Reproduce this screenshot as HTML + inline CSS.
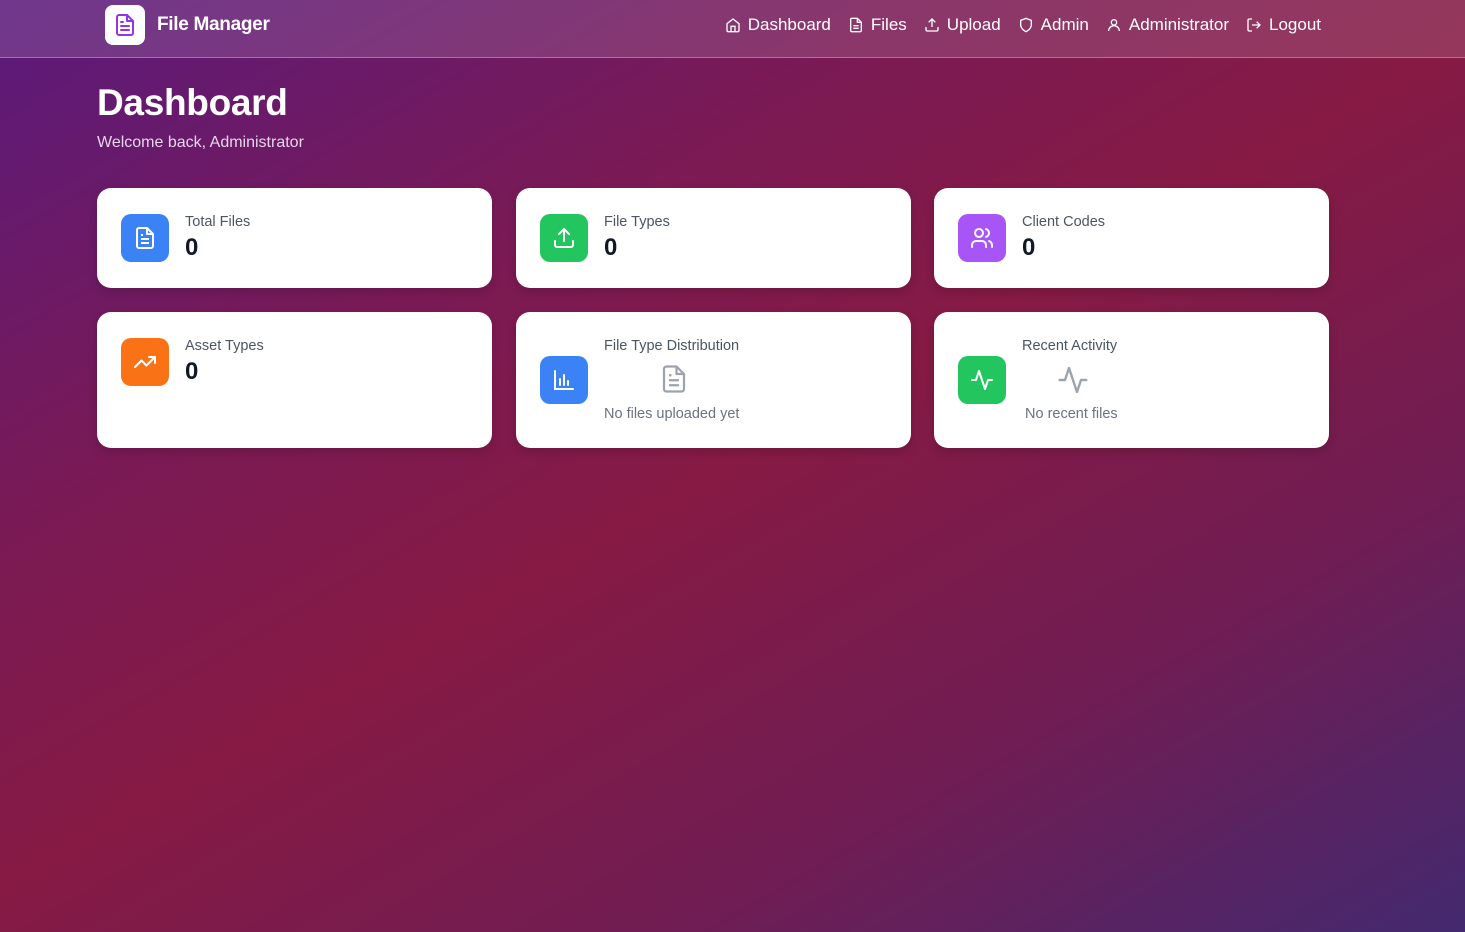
<!DOCTYPE html>
<html><head><meta charset="utf-8"><style>
*{box-sizing:border-box;margin:0;padding:0}
html,body{width:1465px;height:932px;overflow:hidden}
body{font-family:"Liberation Sans",sans-serif;background:linear-gradient(150deg,#5a1a7c 0%,#7a1a55 30%,#861a44 50%,#6f1d54 75%,#43296f 100%);position:relative;color:#fff}
.hdr{position:absolute;left:0;top:0;width:1465px;height:58px;background:rgba(255,255,255,0.13);border-bottom:1px solid rgba(255,255,255,0.3)}
.logo{position:absolute;left:105px;top:5px;width:40px;height:40px;background:#fff;border-radius:8px;display:flex;align-items:center;justify-content:center}
.brand{position:absolute;left:157px;top:14px;font-size:19px;font-weight:bold;letter-spacing:-0.3px}
.nav{position:absolute;right:144px;top:15px;display:flex;gap:17px;font-size:17px}
.nav span{display:flex;align-items:center;gap:7px}
h1{position:absolute;left:97px;top:82px;font-size:37px;font-weight:bold;letter-spacing:-0.3px}
.sub{position:absolute;left:97px;top:134px;font-size:16px;color:#e6d5ea}
.card{position:absolute;background:#fff;border-radius:14px;width:395px;box-shadow:0 4px 10px rgba(0,0,0,.15)}
.ic{position:absolute;left:24px;width:48px;height:48px;border-radius:10px;display:flex;align-items:center;justify-content:center}
.lbl{position:absolute;left:88px;font-size:14.5px;color:#4b5563}
.num{position:absolute;left:88px;font-size:24px;font-weight:bold;color:#111827}
.empty{position:absolute;font-size:14.5px;color:#6b7280;text-align:center}
</style></head><body>
<div class="hdr">
 <div class="logo"><svg width="24" height="24" viewBox="0 0 24 24" fill="none" stroke="#9333ea" stroke-width="2" stroke-linecap="round" stroke-linejoin="round"><path d="M14 2H6a2 2 0 0 0-2 2v16a2 2 0 0 0 2 2h12a2 2 0 0 0 2-2V8z"/><path d="M14 2v6h6M16 13H8M16 17H8M10 9H8"/></svg></div>
 <div class="brand">File Manager</div>
 <div class="nav">
  <span><svg width="16" height="16" viewBox="0 0 24 24" fill="none" stroke="#fff" stroke-width="2"><path d="M3 10l9-7 9 7v10a2 2 0 0 1-2 2H5a2 2 0 0 1-2-2z"/><path d="M9 22v-8h6v8"/></svg>Dashboard</span>
  <span><svg width="16" height="16" viewBox="0 0 24 24" fill="none" stroke="#fff" stroke-width="2"><path d="M14 2H6a2 2 0 0 0-2 2v16a2 2 0 0 0 2 2h12a2 2 0 0 0 2-2V8z"/><path d="M14 2v6h6M16 13H8M16 17H8"/></svg>Files</span>
  <span><svg width="16" height="16" viewBox="0 0 24 24" fill="none" stroke="#fff" stroke-width="2"><path d="M21 15v4a2 2 0 0 1-2 2H5a2 2 0 0 1-2-2v-4M17 8l-5-5-5 5M12 3v12"/></svg>Upload</span>
  <span><svg width="16" height="16" viewBox="0 0 24 24" fill="none" stroke="#fff" stroke-width="2"><path d="M12 22s8-4 8-10V5l-8-3-8 3v7c0 6 8 10 8 10z"/></svg>Admin</span>
  <span><svg width="16" height="16" viewBox="0 0 24 24" fill="none" stroke="#fff" stroke-width="2"><circle cx="12" cy="8" r="4"/><path d="M20 21a8 8 0 0 0-16 0"/></svg>Administrator</span>
  <span><svg width="16" height="16" viewBox="0 0 24 24" fill="none" stroke="#fff" stroke-width="2"><path d="M9 21H5a2 2 0 0 1-2-2V5a2 2 0 0 1 2-2h4M16 17l5-5-5-5M21 12H9"/></svg>Logout</span>
 </div>
</div>
<h1>Dashboard</h1>
<div class="sub">Welcome back, Administrator</div>

<div class="card" style="left:97px;top:188px;height:100px">
 <div class="ic" style="top:26px;background:#3b82f6"><svg width="24" height="24" viewBox="0 0 24 24" fill="none" stroke="#fff" stroke-width="2" stroke-linejoin="round"><path d="M14 2H6a2 2 0 0 0-2 2v16a2 2 0 0 0 2 2h12a2 2 0 0 0 2-2V8z"/><path d="M14 2v6h6M16 13H8M16 17H8M10 9H8"/></svg></div>
 <div class="lbl" style="top:26px">Total Files</div><div class="num" style="top:46px">0</div>
</div>
<div class="card" style="left:516px;top:188px;height:100px">
 <div class="ic" style="top:26px;background:#22c55e"><svg width="24" height="24" viewBox="0 0 24 24" fill="none" stroke="#fff" stroke-width="2" stroke-linecap="round" stroke-linejoin="round"><path d="M21 15v4a2 2 0 0 1-2 2H5a2 2 0 0 1-2-2v-4M17 8l-5-5-5 5M12 3v12"/></svg></div>
 <div class="lbl" style="top:26px">File Types</div><div class="num" style="top:46px">0</div>
</div>
<div class="card" style="left:934px;top:188px;height:100px">
 <div class="ic" style="top:26px;background:#a855f7"><svg width="24" height="24" viewBox="0 0 24 24" fill="none" stroke="#fff" stroke-width="2" stroke-linecap="round"><circle cx="9" cy="7" r="4"/><path d="M16 21v-2a4 4 0 0 0-4-4H6a4 4 0 0 0-4 4v2M22 21v-2a4 4 0 0 0-3-3.87M16 3.13a4 4 0 0 1 0 7.75"/></svg></div>
 <div class="lbl" style="top:26px">Client Codes</div><div class="num" style="top:46px">0</div>
</div>
<div class="card" style="left:97px;top:312px;height:136px">
 <div class="ic" style="top:26px;background:#f97316"><svg width="24" height="24" viewBox="0 0 24 24" fill="none" stroke="#fff" stroke-width="2" stroke-linecap="round" stroke-linejoin="round"><path d="M22 7l-8.5 8.5-5-5L2 17M16 7h6v6"/></svg></div>
 <div class="lbl" style="top:26px">Asset Types</div><div class="num" style="top:46px">0</div>
</div>
<div class="card" style="left:516px;top:312px;height:136px">
 <div class="ic" style="top:44px;background:#3b82f6"><svg width="24" height="24" viewBox="0 0 24 24" fill="none" stroke="#fff" stroke-width="2" stroke-linecap="round"><path d="M3 3v18h18M8 17V11M12 17V7M16 17v-4"/></svg></div>
 <div class="lbl" style="top:26px">File Type Distribution</div>
 <svg style="position:absolute;left:143px;top:52px" width="30" height="30" viewBox="0 0 24 24" fill="none" stroke="#9ca3af" stroke-width="1.8" stroke-linejoin="round"><path d="M14 2H6a2 2 0 0 0-2 2v16a2 2 0 0 0 2 2h12a2 2 0 0 0 2-2V8z"/><path d="M14 2v6h6M16 13H8M16 17H8M10 9H8"/></svg>
 <div class="empty" style="left:88px;top:94px">No files uploaded yet</div>
</div>
<div class="card" style="left:934px;top:312px;height:136px">
 <div class="ic" style="top:44px;background:#22c55e"><svg width="24" height="24" viewBox="0 0 24 24" fill="none" stroke="#fff" stroke-width="2" stroke-linecap="round" stroke-linejoin="round"><path d="M22 12h-4l-3 9L9 3l-3 9H2"/></svg></div>
 <div class="lbl" style="top:26px">Recent Activity</div>
 <svg style="position:absolute;left:123px;top:52px" width="32" height="32" viewBox="0 0 24 24" fill="none" stroke="#9ca3af" stroke-width="1.8" stroke-linecap="round" stroke-linejoin="round"><path d="M22 12h-4l-3 9L9 3l-3 9H2"/></svg>
 <div class="empty" style="left:91px;top:94px">No recent files</div>
</div>
</body></html>
